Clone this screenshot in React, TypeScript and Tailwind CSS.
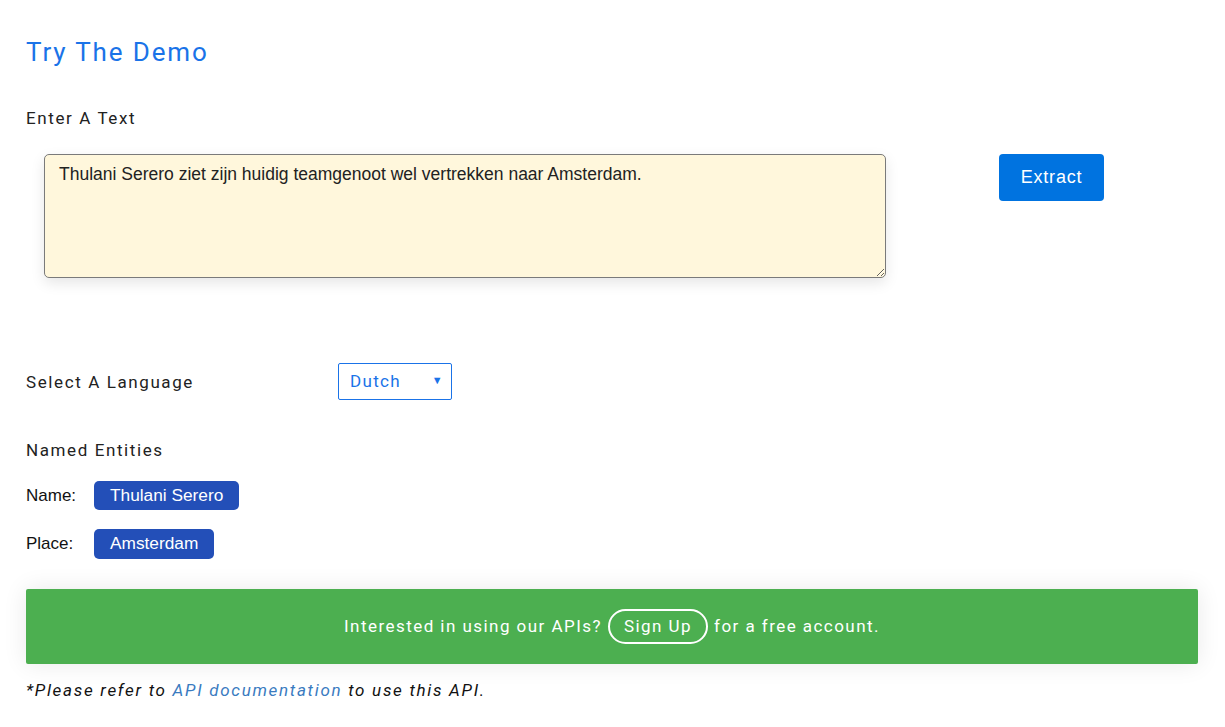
import React from "react";

export default function App() {
  const roboto = { fontFamily: "Roboto, 'Liberation Sans', sans-serif" };
  return (
    <div className="min-h-screen bg-white pl-[26px] pr-[27px] pt-[35px]" style={roboto}>
      <h1 className="text-[26px] leading-[34px] tracking-[1.85px] text-[#1a73e8] font-normal">Try The Demo</h1>

      <div className="mt-[37px] text-[17px] leading-[24px] tracking-[1.6px] text-[#222]">Enter A Text</div>

      <div className="mt-[24px] flex items-start">
        <textarea
          className="ml-[18px] w-[842px] h-[124px] rounded-[5px] border border-[#7a7a7a] bg-[#fff7dc] px-[14px] py-[7px] text-[17.5px] leading-[24px] text-[#222] shadow-[0_5px_14px_rgba(0,0,0,0.1)] outline-none"
          style={{ fontFamily: "'Liberation Sans', Arial, sans-serif" }}
          defaultValue="Thulani Serero ziet zijn huidig teamgenoot wel vertrekken naar Amsterdam."
        />
        <button
          className="ml-[113px] w-[105px] h-[47px] rounded-[4px] bg-[#0073e0] text-white text-[18px] tracking-[0.8px]"
          style={{ fontFamily: "'Liberation Sans', Arial, sans-serif" }}
        >
          Extract
        </button>
      </div>

      <div className="mt-[85px] flex items-center">
        <div className="w-[312px] text-[17px] leading-[24px] tracking-[1.6px] text-[#222]">Select A Language</div>
        <div className="relative w-[114px] h-[37px] rounded-[2px] border border-[#1a73e8] flex items-center pl-[11px] text-[17px] tracking-[1.3px] text-[#1a73e8]">
          Dutch
          <span className="absolute right-[7px] top-[11px] text-[11px] leading-[12px]">▼</span>
        </div>
      </div>

      <div className="mt-[38px] text-[17px] leading-[24px] tracking-[1.6px] text-[#222]">Named Entities</div>

      <div className="mt-[19px] flex flex-col gap-[19px]" style={{ fontFamily: "'Liberation Sans', Arial, sans-serif" }}>
        <div className="flex items-center">
          <span className="w-[68px] text-[17px] text-[#111]">Name:</span>
          <span className="h-[29px] rounded-[5px] bg-[#234fb8] px-[16px] flex items-center text-[17.3px] text-white">Thulani Serero</span>
        </div>
        <div className="flex items-center">
          <span className="w-[68px] text-[17px] text-[#111]">Place:</span>
          <span className="h-[30px] rounded-[5px] bg-[#234fb8] px-[16px] flex items-center text-[17.3px] text-white">Amsterdam</span>
        </div>
      </div>

      <div className="mt-[30px] h-[75px] rounded-[2px] bg-[#4caf50] flex items-center justify-center text-white text-[17px] tracking-[1.45px] shadow-[0_0_24px_rgba(0,0,0,0.09)]">
        <span>Interested in using our APIs?</span>
        <span className="mx-[6px] h-[35px] rounded-full border-2 border-white px-[14px] flex items-center">Sign Up</span>
        <span>for a free account.</span>
      </div>

      <div className="mt-[14px] text-[17px] leading-[24px] italic tracking-[1.7px] text-[#111]">
        *Please refer to <span className="text-[#3a7bbf]">API documentation</span> to use this API.
      </div>
    </div>
  );
}
